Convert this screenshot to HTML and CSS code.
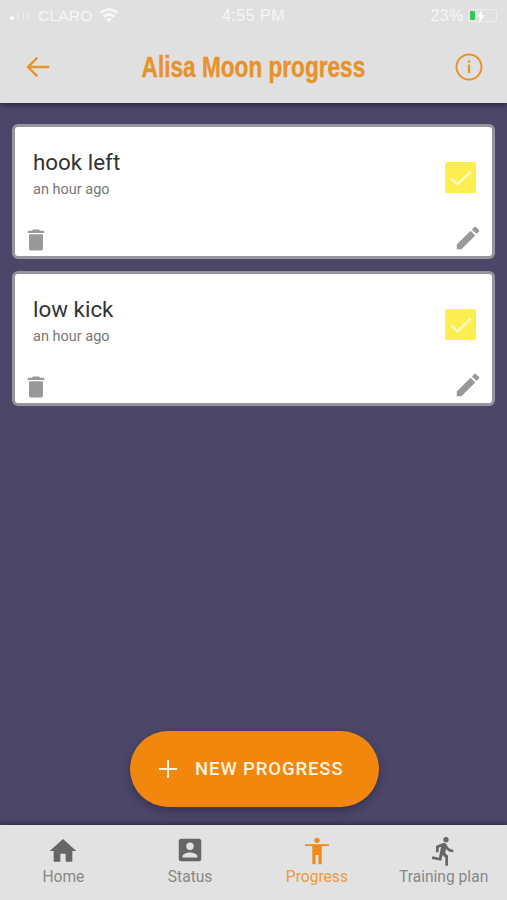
FILE: index.html
```html
<!DOCTYPE html>
<html lang="en">
<head>
  <meta charset="UTF-8" />
  <meta name="viewport" content="width=device-width, initial-scale=1.0"/>
  <title>Alisa Moon progress</title>
  <link rel="stylesheet" href="styles.css">
</head>
<body>
  <div class="app">
    <header class="top">
      <div class="status-bar">
        <div class="status-left">
          <span class="signal"><i class="on"></i><i></i><i></i><i></i></span>
          <span>CLARO</span>
          <svg class="wifi" viewBox="0 0 24 18" width="20" height="15"><path d="M12 17.5l-3.4-4a5 5 0 0 1 6.8 0zM6.8 11.4L4.6 9a11 11 0 0 1 14.8 0l-2.2 2.4a8 8 0 0 0-10.4 0zM2.9 7L.6 4.6a17 17 0 0 1 22.8 0L21.1 7a14 14 0 0 0-18.2 0z" fill="#f6f6f6"/></svg>
        </div>
        <div class="status-time">4:55 PM</div>
        <div class="status-right">
          <span>23%</span>
          <span class="battery"><i class="level"></i><svg viewBox="0 0 10 14" width="10" height="14"><path d="M6 0L1 8h3l-1 6 6-8H5.500z" fill="#fff"/></svg></span>
        </div>
      </div>
      <div class="title-bar">
        <svg class="ico-btn" viewBox="0 0 24 24" width="30" height="30"><path d="M21 12H4M11.500 4.500L4 12l7.500 7.500" fill="none" stroke="#e8922a" stroke-width="1.900"/></svg>
        <h1>Alisa Moon progress</h1>
        <svg class="ico-btn" viewBox="0 0 30 30" width="30" height="30"><circle cx="15" cy="15" r="12.500" fill="none" stroke="#e8922a" stroke-width="2"/><circle cx="15" cy="9.500" r="1.300" fill="#e8922a"/><rect x="13.900" y="12.500" width="2.200" height="8.500" fill="#e8922a"/></svg>
      </div>
    </header>

    <main class="content">
      <section class="card">
        <div class="card-body">
          <div>
            <div class="card-title">hook left</div>
            <div class="card-time">an hour ago</div>
          </div>
          <div class="check"><svg viewBox="0 0 24 24" width="28" height="28"><path d="M3.500 12.500l5.500 5L20.500 6.500" fill="none" stroke="#fdf8b8" stroke-width="2.400"/></svg></div>
        </div>
        <div class="card-actions">
          <svg viewBox="0 0 24 24" width="28" height="28"><path d="M6 19c0 1.100.9 2 2 2h8c1.100 0 2-.9 2-2V7H6v12zM19 4h-3.500l-1-1h-5l-1 1H5v2h14V4z" fill="#999"/></svg>
          <svg viewBox="0 0 24 24" width="30" height="30"><path d="M3 17.250V21h3.750L17.810 9.940l-3.750-3.750L3 17.250zM20.710 7.040a1 1 0 0 0 0-1.410l-2.340-2.340a1 1 0 0 0-1.410 0l-1.830 1.830 3.750 3.750 1.830-1.830z" fill="#999"/></svg>
        </div>
      </section>

      <section class="card">
        <div class="card-body">
          <div>
            <div class="card-title">low kick</div>
            <div class="card-time">an hour ago</div>
          </div>
          <div class="check"><svg viewBox="0 0 24 24" width="28" height="28"><path d="M3.500 12.500l5.500 5L20.500 6.500" fill="none" stroke="#fdf8b8" stroke-width="2.400"/></svg></div>
        </div>
        <div class="card-actions">
          <svg viewBox="0 0 24 24" width="28" height="28"><path d="M6 19c0 1.100.9 2 2 2h8c1.100 0 2-.9 2-2V7H6v12zM19 4h-3.500l-1-1h-5l-1 1H5v2h14V4z" fill="#999"/></svg>
          <svg viewBox="0 0 24 24" width="30" height="30"><path d="M3 17.250V21h3.750L17.810 9.940l-3.750-3.750L3 17.250zM20.710 7.040a1 1 0 0 0 0-1.410l-2.340-2.340a1 1 0 0 0-1.410 0l-1.830 1.830 3.750 3.750 1.830-1.830z" fill="#999"/></svg>
        </div>
      </section>

      <button class="fab">
        <svg viewBox="0 0 20 20" width="20" height="20"><path d="M10 1v18M1 10h18" stroke="#fff3df" stroke-width="2" fill="none"/></svg>
        <span>NEW PROGRESS</span>
      </button>
    </main>

    <nav class="tabs">
      <div class="tab">
        <svg viewBox="0 0 24 24" width="32" height="32"><path d="M10 20v-6h4v6h5v-8h3L12 3 2 12h3v8z" fill="#666"/></svg>
        <span>Home</span>
      </div>
      <div class="tab">
        <svg class="tab-ico-small" viewBox="0 0 24 24" width="30" height="30"><path d="M3 5v14a2 2 0 0 0 2 2h14a2 2 0 0 0 2-2V5a2 2 0 0 0-2-2H5a2 2 0 0 0-2 2zm12 4a3 3 0 1 1-6 0 3 3 0 0 1 6 0zm-9 8c0-2 4-3.100 6-3.100s6 1.100 6 3.100v1H6v-1z" fill="#666"/></svg>
        <span>Status</span>
      </div>
      <div class="tab active">
        <svg viewBox="0 0 24 24" width="32" height="32"><path d="M12 2a2 2 0 1 1 0 4 2 2 0 0 1 0-4zM21 8.200h-5.500V22h-2.400v-7h-2.200v7H8.500V8.200H3V7h18z" fill="#ef8a17"/></svg>
        <span>Progress</span>
      </div>
      <div class="tab">
        <svg viewBox="0 0 24 24" width="32" height="32"><path d="M13.490 5.480a2 2 0 1 0 0-4 2 2 0 0 0 0 4zm-3.600 13.900l1-4.400 2.100 2v6h2v-7.500l-2.100-2 .6-3c1.300 1.500 3.300 2.500 5.500 2.500v-2c-1.900 0-3.500-1-4.300-2.400l-1-1.600c-.4-.6-1-1-1.700-1-.3 0-.5.1-.8.1l-5.200 2.200v4.700h2v-3.400l1.800-.7-1.600 8.100-4.900-1-.4 2 7 1.400z" fill="#666"/></svg>
        <span>Training plan</span>
      </div>
    </nav>
  </div>
</body>
</html>
```

FILE: styles.css
```css
* {
  box-sizing: border-box;
}

body {
  margin: 0;
  font-family: Roboto, "Liberation Sans", sans-serif;
  background-color: #4c4669;
}

.app {
  display: flex;
  flex-direction: column;
  height: 900px;
}

.top {
  height: 103px;
  background-color: #e0e0e0;
  box-shadow: 0 2px 5px rgba(20, 15, 50, 0.6);
}

.status-bar {
  display: grid;
  grid-template-columns: 1fr auto 1fr;
  align-items: center;
  height: 30px;
  padding: 1px 10px 0 10px;
  color: #f6f6f6;
  font-size: 16px;
  letter-spacing: 0.5px;
  font-family: "Liberation Sans", sans-serif;
}

.status-left {
  display: flex;
  align-items: center;
  gap: 7px;
  font-size: 15.5px;
  letter-spacing: 0.2px;
}

.signal {
  display: flex;
  align-items: flex-end;
  gap: 3px;
  margin-right: 2px;
}

.signal i {
  width: 2px;
  height: 8px;
  background-color: #e8e8e8;
}

.signal i.on {
  width: 4px;
  height: 4px;
  border-radius: 50%;
  background-color: #fff;
}

.status-right {
  display: flex;
  justify-content: flex-end;
  align-items: center;
  gap: 4px;
}

.battery {
  display: flex;
  align-items: center;
  gap: 1px;
  width: 29px;
  height: 13px;
  padding-left: 1px;
  border: 1px solid #ececec;
  border-radius: 3px;
}

.battery .level {
  width: 5px;
  height: 9px;
  border-radius: 1px;
  background-color: #35c759;
}

.title-bar {
  display: flex;
  justify-content: space-between;
  align-items: center;
  height: 73px;
  padding: 0 23px;
}

/* no condensed face is installed, so the bold sans is squeezed */
.title-bar h1 {
  margin: 2px 0 0;
  color: #e8922a;
  font-family: "Liberation Sans", sans-serif;
  font-size: 29px;
  font-weight: 700;
  white-space: nowrap;
  -webkit-text-stroke: 0.4px #e8922a;
  transform: scaleX(0.78);
}

.content {
  flex: 1;
  display: flex;
  flex-direction: column;
  gap: 12px;
  padding: 21px 12px 18px;
}

.card {
  display: flex;
  flex-direction: column;
  justify-content: space-between;
  height: 135px;
  background-color: #fff;
  border: 3px solid #96949f;
  border-radius: 6px;
}

.card-body {
  display: flex;
  justify-content: space-between;
  align-items: flex-start;
  padding: 22px 16px 0 18px;
}

.card-title {
  color: #333;
  font-size: 22.4px;
  line-height: 26px;
}

.card-time {
  margin-top: 7px;
  color: #777;
  font-size: 14.5px;
  line-height: 16px;
}

.check {
  display: flex;
  justify-content: center;
  align-items: center;
  width: 31px;
  height: 31px;
  margin-top: 13px;
  border-radius: 2px;
  background-color: #fdee4f;
}

.card-actions {
  display: flex;
  justify-content: space-between;
  align-items: flex-end;
  padding: 0 9px 3px 7px;
}

.card-actions svg:first-child {
  margin-bottom: -1px;
}

.fab {
  display: flex;
  align-items: center;
  gap: 17px;
  align-self: center;
  width: 249px;
  height: 76px;
  margin-top: auto;
  margin-left: 2px;
  padding: 0 0 0 28px;
  border: none;
  border-radius: 38px;
  background-color: #f1870c;
  box-shadow: 0 4px 10px rgba(30, 20, 50, 0.4);
  color: #fff3df;
  font-family: Roboto, "Liberation Sans", sans-serif;
  font-size: 18.5px;
  font-weight: 500;
  letter-spacing: 0.9px;
}

.tabs {
  display: grid;
  grid-template-columns: repeat(4, 1fr);
  height: 75px;
  background-color: #e2e2e2;
  box-shadow: 0 -2px 4px rgba(20, 15, 50, 0.5);
}

.tab {
  display: flex;
  flex-direction: column;
  align-items: center;
  padding-top: 10px;
  color: #888;
  font-size: 15.6px;
}

.tab span {
  margin-top: 1px;
}

.tab-ico-small {
  margin-bottom: 2px;
}

.tab.active {
  color: #ec9a3a;
}
```
